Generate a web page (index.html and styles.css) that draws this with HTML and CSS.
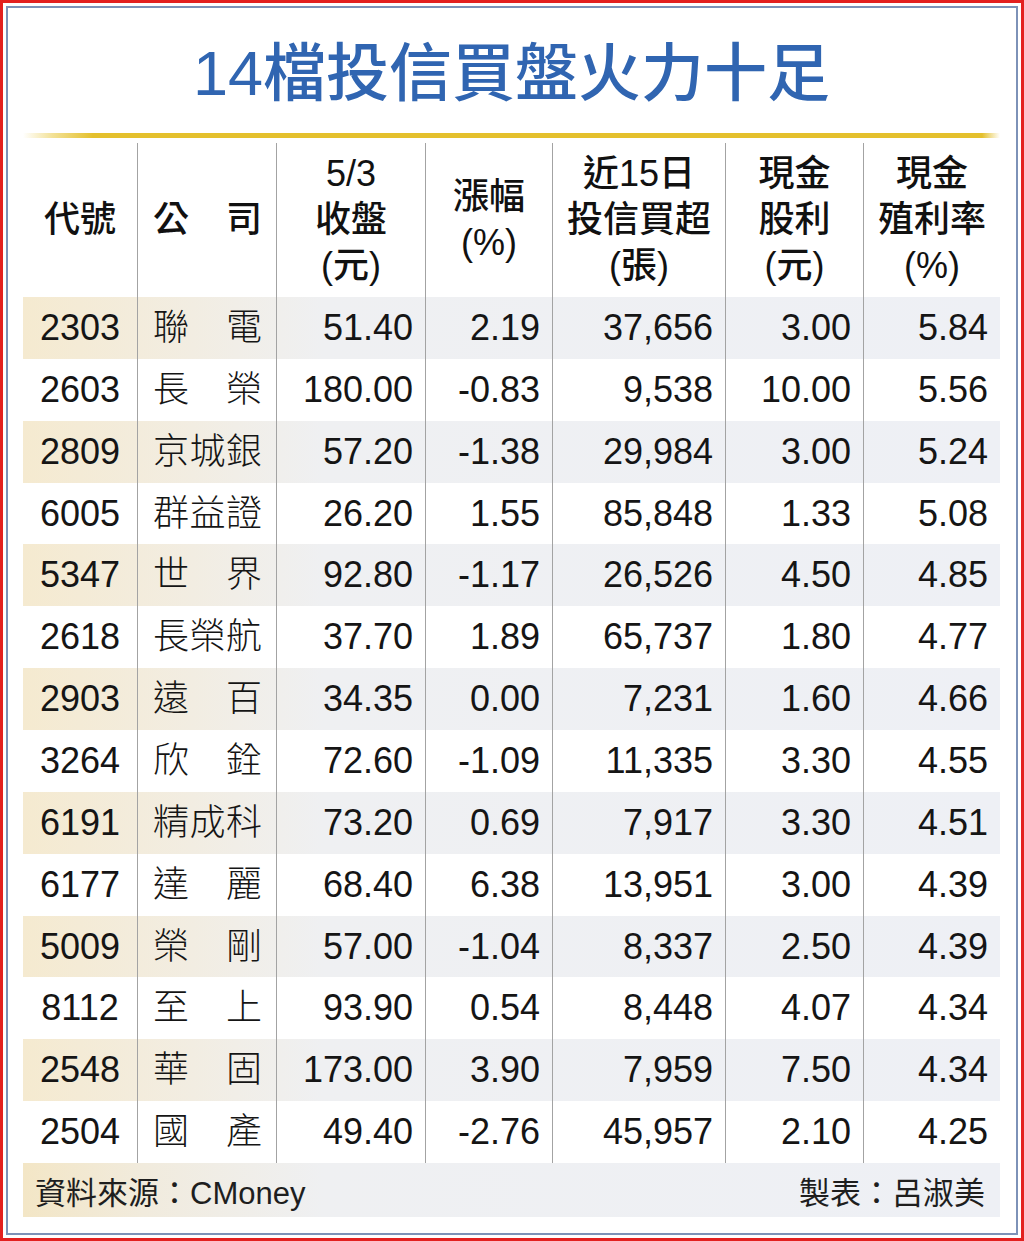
FILE: index.html
```html
<!DOCTYPE html>
<html lang="zh-Hant">
<head>
<meta charset="utf-8">
<title>14檔投信買盤火力十足</title>
<link rel="stylesheet" href="styles.css">
</head>
<body>
<div class="outer">
  <div class="inner">
    <h1 class="title">14檔投信買盤火力十足</h1>
    <div class="rule"></div>
    <div class="table">
      <div class="row head">
        <div class="cell"><span>代號</span></div>
        <div class="cell name"><span>公</span><span>司</span></div>
        <div class="cell"><span>5/3</span><span>收盤</span><span>(元)</span></div>
        <div class="cell"><span>漲幅</span><span>(%)</span></div>
        <div class="cell"><span>近15日</span><span>投信買超</span><span>(張)</span></div>
        <div class="cell"><span>現金</span><span>股利</span><span>(元)</span></div>
        <div class="cell"><span>現金</span><span>殖利率</span><span>(%)</span></div>
      </div>
      <div class="row alt"><div class="cell code">2303</div><div class="cell name"><span>聯</span><span>電</span></div><div class="cell num">51.40</div><div class="cell num">2.19</div><div class="cell num">37,656</div><div class="cell num">3.00</div><div class="cell num">5.84</div></div>
      <div class="row"><div class="cell code">2603</div><div class="cell name"><span>長</span><span>榮</span></div><div class="cell num">180.00</div><div class="cell num">-0.83</div><div class="cell num">9,538</div><div class="cell num">10.00</div><div class="cell num">5.56</div></div>
      <div class="row alt"><div class="cell code">2809</div><div class="cell name"><span>京</span><span>城</span><span>銀</span></div><div class="cell num">57.20</div><div class="cell num">-1.38</div><div class="cell num">29,984</div><div class="cell num">3.00</div><div class="cell num">5.24</div></div>
      <div class="row"><div class="cell code">6005</div><div class="cell name"><span>群</span><span>益</span><span>證</span></div><div class="cell num">26.20</div><div class="cell num">1.55</div><div class="cell num">85,848</div><div class="cell num">1.33</div><div class="cell num">5.08</div></div>
      <div class="row alt"><div class="cell code">5347</div><div class="cell name"><span>世</span><span>界</span></div><div class="cell num">92.80</div><div class="cell num">-1.17</div><div class="cell num">26,526</div><div class="cell num">4.50</div><div class="cell num">4.85</div></div>
      <div class="row"><div class="cell code">2618</div><div class="cell name"><span>長</span><span>榮</span><span>航</span></div><div class="cell num">37.70</div><div class="cell num">1.89</div><div class="cell num">65,737</div><div class="cell num">1.80</div><div class="cell num">4.77</div></div>
      <div class="row alt"><div class="cell code">2903</div><div class="cell name"><span>遠</span><span>百</span></div><div class="cell num">34.35</div><div class="cell num">0.00</div><div class="cell num">7,231</div><div class="cell num">1.60</div><div class="cell num">4.66</div></div>
      <div class="row"><div class="cell code">3264</div><div class="cell name"><span>欣</span><span>銓</span></div><div class="cell num">72.60</div><div class="cell num">-1.09</div><div class="cell num">11,335</div><div class="cell num">3.30</div><div class="cell num">4.55</div></div>
      <div class="row alt"><div class="cell code">6191</div><div class="cell name"><span>精</span><span>成</span><span>科</span></div><div class="cell num">73.20</div><div class="cell num">0.69</div><div class="cell num">7,917</div><div class="cell num">3.30</div><div class="cell num">4.51</div></div>
      <div class="row"><div class="cell code">6177</div><div class="cell name"><span>達</span><span>麗</span></div><div class="cell num">68.40</div><div class="cell num">6.38</div><div class="cell num">13,951</div><div class="cell num">3.00</div><div class="cell num">4.39</div></div>
      <div class="row alt"><div class="cell code">5009</div><div class="cell name"><span>榮</span><span>剛</span></div><div class="cell num">57.00</div><div class="cell num">-1.04</div><div class="cell num">8,337</div><div class="cell num">2.50</div><div class="cell num">4.39</div></div>
      <div class="row"><div class="cell code">8112</div><div class="cell name"><span>至</span><span>上</span></div><div class="cell num">93.90</div><div class="cell num">0.54</div><div class="cell num">8,448</div><div class="cell num">4.07</div><div class="cell num">4.34</div></div>
      <div class="row alt"><div class="cell code">2548</div><div class="cell name"><span>華</span><span>固</span></div><div class="cell num">173.00</div><div class="cell num">3.90</div><div class="cell num">7,959</div><div class="cell num">7.50</div><div class="cell num">4.34</div></div>
      <div class="row"><div class="cell code">2504</div><div class="cell name"><span>國</span><span>產</span></div><div class="cell num">49.40</div><div class="cell num">-2.76</div><div class="cell num">45,957</div><div class="cell num">2.10</div><div class="cell num">4.25</div></div>
    </div>
    <div class="foot">
      <span>資料來源：CMoney</span>
      <span>製表：呂淑美</span>
    </div>
  </div>
</div>
</body>
</html>
```

FILE: styles.css
```css
html, body {
  margin: 0;
  padding: 0;
  background: #ffffff;
}

body {
  width: 1024px;
  height: 1241px;
  font-family: "Liberation Sans", "Noto Sans CJK TC", sans-serif;
  color: #151515;
}

.outer {
  box-sizing: border-box;
  width: 1024px;
  height: 1241px;
  border: 3px solid #e3201f;
  padding: 3px;
}

.inner {
  box-sizing: border-box;
  height: 100%;
  border: 2px solid #7d92b8;
  padding: 0 16px 0 15px;
}

.title {
  margin: 0;
  height: 125px;
  padding-top: 6px;
  box-sizing: border-box;
  line-height: 119px;
  text-align: center;
  font-size: 63px;
  font-weight: 500;
  color: #3065b1;
  font-family: "Liberation Sans", "Noto Sans CJK TC", sans-serif;
}

.rule {
  height: 5px;
  margin-bottom: 5px;
  background: linear-gradient(90deg, rgba(230, 195, 45, 0) 0, rgba(230, 195, 45, 0.5) 30px, #e4c02d 70px, #e4c02d calc(100% - 18px), rgba(230, 195, 45, 0) 100%);
}

.table {
  display: flex;
  flex-direction: column;
}

.row {
  display: grid;
  grid-template-columns: 114px 139px 149px 127px 173px 138px 137px;
  height: 61.86px;
}

.row.head {
  height: 154px;
}

.row.alt {
  background: linear-gradient(90deg, #f5ead0 0, #f2ede2 170px, #eff0f2 300px, #eef0f5 100%);
}

.cell {
  display: flex;
  align-items: center;
  font-size: 36px;
  line-height: 1;
  white-space: nowrap;
}

.cell + .cell {
  border-left: 1px solid #a3a3a3;
}

.head .cell {
  flex-direction: column;
  justify-content: center;
  line-height: 46px;
  font-weight: 500;
  color: #111;
}

.head .cell.name {
  flex-direction: row;
  justify-content: space-between;
  padding: 0 14px 0 15px;
}

.code {
  justify-content: center;
}

.name {
  justify-content: space-between;
  padding: 0 14px 0 15px;
  font-weight: 300;
}

.num {
  justify-content: flex-end;
  padding-right: 12px;
}

.foot {
  display: flex;
  justify-content: space-between;
  align-items: center;
  height: 54px;
  padding: 0 15px 0 12px;
  font-size: 31px;
  color: #1e1e1e;
  background: linear-gradient(90deg, #f3e6c6 0, #f1ebdd 120px, #eff0f2 300px, #eef0f5 100%);
}
```
